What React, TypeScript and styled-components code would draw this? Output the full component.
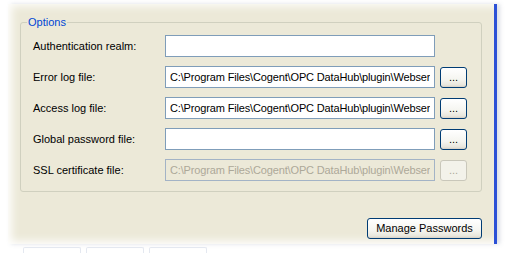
import { FC, Fragment } from "react";
import styled, { createGlobalStyle } from "styled-components";

const GlobalStyle = createGlobalStyle`
  html, body {
    margin: 0;
    background: #ffffff;
  }
  body {
    font-family: Tahoma, "Liberation Sans", Arial, sans-serif;
    font-size: 11px;
  }
`;

const Page = styled.div`
  width: 507px;
  height: 253px;
  overflow: hidden;
  padding: 4px 0 0 8px;
  box-sizing: border-box;
`;

const Panel = styled.div`
  width: 489px;
  height: 240px;
  box-sizing: border-box;
  background: #ece9d8;
  border-right: 3px solid #2b50d6;
  box-shadow: inset 10px 8px 8px -6px rgba(255, 255, 255, 0.9),
    inset 0 -8px 8px -5px rgba(255, 255, 255, 0.95),
    3px 0 4px rgba(120, 130, 160, 0.25);
  padding: 12px 12px 0 12px;
  display: flex;
  flex-direction: column;
`;

const GroupBox = styled.fieldset`
  margin: 0;
  padding: 6px 12px 10px 12px;
  border: 1px solid #d0d0bf;
  border-radius: 3px;
  min-width: 0;
`;

const Legend = styled.legend`
  color: #0046d5;
  padding: 0 1px;
  margin-left: -6px;
  line-height: 13px;
`;

const Form = styled.div`
  display: grid;
  grid-template-columns: 127px 270px 27px;
  column-gap: 5px;
  row-gap: 9px;
  align-items: center;
`;

const Label = styled.label`
  color: #000000;
`;

const TextBox = styled.input`
  height: 22px;
  box-sizing: border-box;
  border: 1px solid #7f9db9;
  padding: 0 4px;
  font-family: inherit;
  font-size: 11px;
  letter-spacing: -0.15px;
  color: #000000;
  background: #ffffff;
  outline: none;
  &:disabled {
    background: #ece9d8;
    color: #aca899;
    border-color: #a3b3c6;
  }
`;

const XpButton = styled.button<{ $wide?: boolean }>`
  height: 21px;
  width: ${(p) => (p.$wide ? "115px" : "27px")};
  padding: 0;
  border: 1px solid #003c74;
  border-radius: 3px;
  background: linear-gradient(#ffffff 0%, #f5f5f0 60%, #e8e6dc 90%, #d6d0c5 100%);
  font-family: inherit;
  font-size: 11px;
  color: #000000;
  line-height: 19px;
  &:disabled {
    border-color: #c9c7ba;
    background: #f3f2ea;
    color: #aca899;
  }
`;

const Footer = styled.div`
  display: flex;
  justify-content: flex-end;
  margin-top: 26px;
`;

const TabRow = styled.div`
  display: flex;
  gap: 5px;
  padding-left: 15px;
  margin-top: 3px;
`;

const GhostTab = styled.div`
  width: 56px;
  height: 12px;
  border: 1px solid #e4e8f0;
  border-bottom: none;
  border-radius: 2px 2px 0 0;
`;

const path = "C:\\Program Files\\Cogent\\OPC DataHub\\plugin\\Webserver";

const rows = [
  { label: "Authentication realm:", value: "", browse: false, disabled: false },
  { label: "Error log file:", value: path, browse: true, disabled: false },
  { label: "Access log file:", value: path, browse: true, disabled: false },
  { label: "Global password file:", value: "", browse: true, disabled: false },
  { label: "SSL certificate file:", value: path, browse: true, disabled: true },
];

const App: FC = () => {
  return (
    <Page>
      <GlobalStyle />
      <Panel>
        <GroupBox>
          <Legend>Options</Legend>
          <Form>
            {rows.map((row) => (
              <Fragment key={row.label}>
                <Label>{row.label}</Label>
                <TextBox defaultValue={row.value} disabled={row.disabled} readOnly />
                {row.browse ? <XpButton disabled={row.disabled}>...</XpButton> : <span />}
              </Fragment>
            ))}
          </Form>
        </GroupBox>
        <Footer>
          <XpButton $wide>Manage Passwords</XpButton>
        </Footer>
      </Panel>
      <TabRow>
        <GhostTab />
        <GhostTab />
        <GhostTab />
      </TabRow>
    </Page>
  );
};

export default App;
